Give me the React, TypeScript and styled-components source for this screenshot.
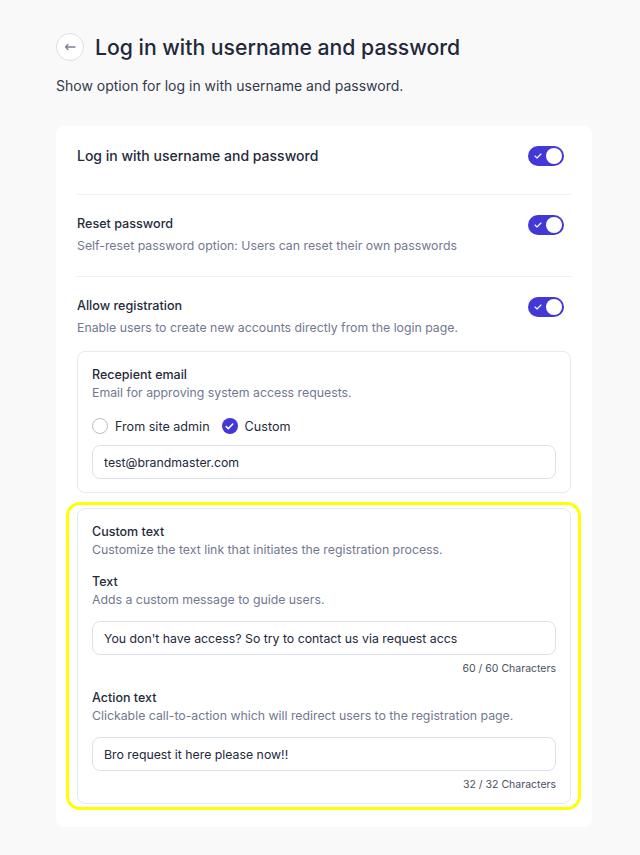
import React from "react";
import styled, { createGlobalStyle } from "styled-components";

const Global = createGlobalStyle`
  html, body { margin: 0; padding: 0; background: #f9f9fa; }
  body { font-family: Inter, "Noto Sans", sans-serif; color: #1f2535; -webkit-font-smoothing: antialiased; }
  * { box-sizing: border-box; }
`;

const Page = styled.div`
  padding: 33px 48px 29px 56px;
  min-height: 855px;
`;

const Header = styled.div`
  display: flex;
  align-items: center;
  gap: 11px;
`;

const BackButton = styled.button`
  width: 28px;
  height: 28px;
  border-radius: 50%;
  border: 1px solid #dcdfe6;
  background: #fff;
  display: flex;
  align-items: center;
  justify-content: center;
  padding: 0;
  color: #717689;
`;

const Title = styled.h1`
  margin: 0;
  font-size: 21.2px;
  font-weight: 500;
  line-height: 28px;
  color: #222839;
`;

const Subtitle = styled.p`
  margin: 15px 0 0;
  font-size: 14px;
  line-height: 20px;
  color: #343a4b;
`;

const Card = styled.div`
  margin-top: 30px;
  background: #fff;
  border-radius: 8px;
  padding: 20px 21px 17px;
`;

const Row = styled.div<{ $pt: number; $pb: number; $divider?: boolean }>`
  display: flex;
  justify-content: space-between;
  align-items: flex-start;
  padding: ${(p) => p.$pt}px 0 ${(p) => p.$pb}px;
  border-bottom: ${(p) => (p.$divider ? "1px solid #eff0f3" : "none")};
`;

const RowText = styled.div`
  display: flex;
  flex-direction: column;
  gap: 2px;
  padding-top: 1px;
`;

const MainLabel = styled.div`
  font-size: 14px;
  font-weight: 500;
  line-height: 20px;
  color: #252b3b;
`;

const Label = styled.div`
  font-size: 12.6px;
  font-weight: 500;
  line-height: 20px;
  color: #252b3b;
`;

const Desc = styled.div`
  font-size: 12.3px;
  line-height: 20px;
  color: #727891;
`;

const ToggleTrack = styled.div<{ $mt?: number }>`
  width: 36px;
  height: 20px;
  border-radius: 10px;
  background: #4338d6;
  position: relative;
  flex-shrink: 0;
  margin-top: ${(p) => p.$mt ?? 0}px;
  margin-right: 7px;
`;

const Knob = styled.div`
  position: absolute;
  top: 2px;
  right: 2px;
  width: 16px;
  height: 16px;
  border-radius: 50%;
  background: #fff;
`;

const ToggleCheck = styled.svg`
  position: absolute;
  left: 6px;
  top: 7px;
`;

const Toggle = ({ mt }: { mt?: number }) => (
  <ToggleTrack $mt={mt}>
    <ToggleCheck width="8" height="6" viewBox="0 0 8 6" fill="none">
      <path d="M1 3l2 2 4-4" stroke="#fff" strokeWidth="1.1" strokeLinecap="round" strokeLinejoin="round" />
    </ToggleCheck>
    <Knob />
  </ToggleTrack>
);

const SubBox = styled.div<{ $mt?: number; $pb?: number }>`
  margin-top: ${(p) => p.$mt ?? 0}px;
  border: 1px solid #e7e9ee;
  border-radius: 8px;
  padding: 14px 14px ${(p) => p.$pb ?? 13}px;
  background: #fff;
`;

const BoxLabel = styled.div`
  font-size: 12.5px;
  font-weight: 500;
  line-height: 18px;
  color: #252b3b;
`;

const BoxDesc = styled.div`
  font-size: 12.3px;
  line-height: 18px;
  color: #727891;
`;

const Highlight = styled.div`
  margin: 9px -10px 0 -11px;
  border: 3px solid #ffff00;
  border-radius: 14px;
  padding: 3px 7px 3px 8px;
`;

const RadioRow = styled.div`
  display: flex;
  align-items: center;
  gap: 12px;
  margin-top: 14px;
  height: 20px;
`;

const RadioOption = styled.label`
  display: flex;
  align-items: center;
  gap: 7px;
  font-size: 12.6px;
  color: #252b3b;
`;

const RadioCircle = styled.span<{ $checked?: boolean }>`
  width: 16px;
  height: 16px;
  border-radius: 50%;
  border: ${(p) => (p.$checked ? "none" : "1px solid #b9bfcc")};
  background: ${(p) => (p.$checked ? "#4338d6" : "#fff")};
  display: flex;
  align-items: center;
  justify-content: center;
`;

const Input = styled.div<{ $mt: number }>`
  margin-top: ${(p) => p.$mt}px;
  height: 34px;
  border: 1px solid #dde1e8;
  border-radius: 8px;
  padding: 0 11px;
  display: flex;
  align-items: center;
  font-size: 12.3px;
  color: #222839;
`;

const Counter = styled.div`
  margin-top: 7px;
  text-align: right;
  font-size: 10.5px;
  line-height: 14px;
  color: #4a5062;
`;

const Section = styled.div<{ $mt: number }>`
  margin-top: ${(p) => p.$mt}px;
`;

export default function App() {
  return (
    <>
      <Global />
      <Page>
        <Header>
          <BackButton aria-label="Back">
            <svg width="12" height="8" viewBox="0 0 12 8" fill="none">
              <path d="M11 4H1.5M1.5 4L4 1.5M1.5 4L4 6.5" stroke="#7a8093" strokeWidth="1.3" strokeLinecap="round" strokeLinejoin="round" />
            </svg>
          </BackButton>
          <Title>Log in with username and password</Title>
        </Header>
        <Subtitle>Show option for log in with username and password.</Subtitle>

        <Card>
          <Row $pt={0} $pb={28} $divider>
            <MainLabel>Log in with username and password</MainLabel>
            <Toggle />
          </Row>
          <Row $pt={18} $pb={20} $divider>
            <RowText>
              <Label>Reset password</Label>
              <Desc>Self-reset password option: Users can reset their own passwords</Desc>
            </RowText>
            <Toggle mt={2} />
          </Row>
          <Row $pt={18} $pb={0}>
            <RowText>
              <Label>Allow registration</Label>
              <Desc>Enable users to create new accounts directly from the login page.</Desc>
            </RowText>
            <Toggle mt={2} />
          </Row>

          <SubBox $mt={13}>
            <BoxLabel>Recepient email</BoxLabel>
            <BoxDesc>Email for approving system access requests.</BoxDesc>
            <RadioRow>
              <RadioOption>
                <RadioCircle />
                From site admin
              </RadioOption>
              <RadioOption>
                <RadioCircle $checked>
                  <svg width="9" height="7" viewBox="0 0 9 7" fill="none">
                    <path d="M1.2 3.6l2.1 2 4.5-4.6" stroke="#fff" strokeWidth="1.6" strokeLinecap="round" strokeLinejoin="round" />
                  </svg>
                </RadioCircle>
                Custom
              </RadioOption>
            </RadioRow>
            <Input $mt={9}>test@brandmaster.com</Input>
          </SubBox>

          <Highlight>
            <SubBox $pb={11}>
              <BoxLabel>Custom text</BoxLabel>
              <BoxDesc>Customize the text link that initiates the registration process.</BoxDesc>
              <Section $mt={14}>
                <BoxLabel>Text</BoxLabel>
                <BoxDesc>Adds a custom message to guide users.</BoxDesc>
                <Input $mt={12}>You don't have access? So try to contact us via request accs</Input>
                <Counter>60 / 60 Characters</Counter>
              </Section>
              <Section $mt={13}>
                <BoxLabel>Action text</BoxLabel>
                <BoxDesc>Clickable call-to-action which will redirect users to the registration page.</BoxDesc>
                <Input $mt={12}>Bro request it here please now!!</Input>
                <Counter>32 / 32 Characters</Counter>
              </Section>
            </SubBox>
          </Highlight>
        </Card>
      </Page>
    </>
  );
}
